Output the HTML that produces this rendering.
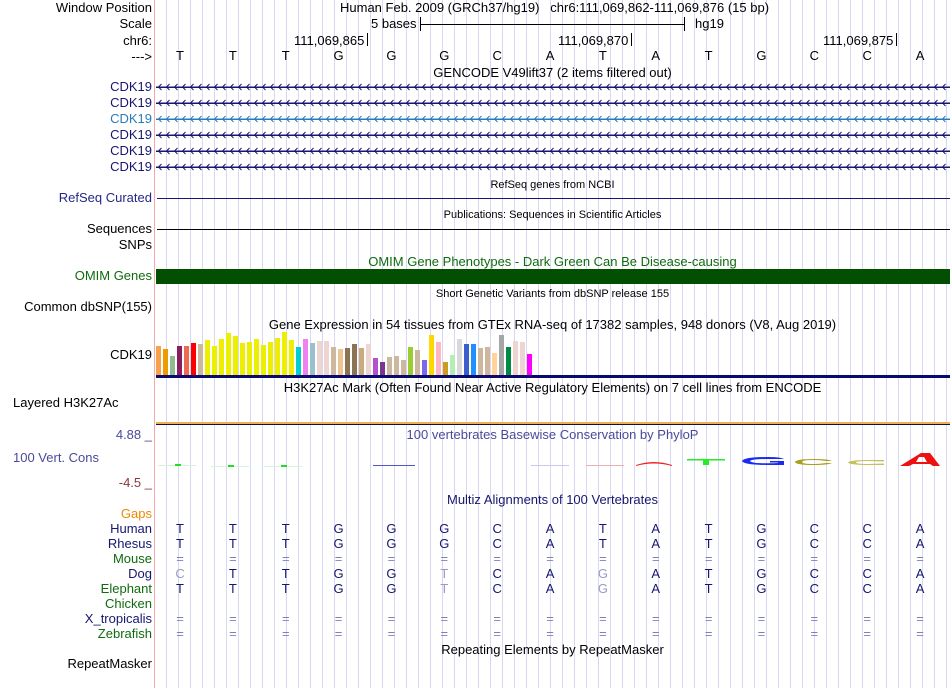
<!DOCTYPE html>
<html><head><meta charset="utf-8"><style>
body{margin:0;width:950px;height:688px;background:#fff;position:relative;overflow:hidden;font-family:"Liberation Sans",sans-serif;font-size:13px;color:#000}
.grid{position:absolute;left:155px;top:0;width:795px;height:688px;background:repeating-linear-gradient(90deg,transparent 0,transparent 11px,#d8d8f4 11px,#d8d8f4 12px)}
.pink{position:absolute;left:154px;top:0;width:1px;height:688px;background:#f4a8a8}
.t{position:absolute;white-space:nowrap;line-height:14px}
.l{position:absolute;right:798px;white-space:nowrap;line-height:14px;text-align:right}
.c{position:absolute;left:155px;width:795px;text-align:center;white-space:nowrap;line-height:14px}
.s{font-size:11px}
.row{position:absolute;left:153.6px;display:flex;line-height:14px}
.row span{width:52.86px;text-align:center}
.n{color:#161670}.g{color:#0f6b0f}
.bars div{position:absolute;bottom:0;width:5px}
</style></head><body>
<div class="grid"></div><div class="pink"></div>

<div class="l" style="top:1px">Window Position</div>
<div class="l" style="top:17px">Scale</div>
<div class="l" style="top:34px">chr6:</div>
<div class="l" style="top:50px">---&gt;</div>

<div class="t" style="left:340px;top:1px">Human Feb. 2009 (GRCh37/hg19) &nbsp; chr6:111,069,862-111,069,876 (15 bp)</div>
<div class="t" style="left:371px;top:17px">5 bases</div>
<div style="position:absolute;left:420px;top:24px;width:264px;height:1px;background:#000"></div>
<div style="position:absolute;left:420px;top:17px;width:1px;height:14px;background:#000"></div>
<div style="position:absolute;left:684px;top:17px;width:1px;height:14px;background:#000"></div>
<div class="t" style="left:695px;top:17px">hg19</div>
<div class="t" style="left:294px;top:34px">111,069,865</div>
<div style="position:absolute;left:367px;top:33px;width:1px;height:13px;background:#000"></div>
<div class="t" style="left:558px;top:34px">111,069,870</div>
<div style="position:absolute;left:631px;top:33px;width:1px;height:13px;background:#000"></div>
<div class="t" style="left:823px;top:34px">111,069,875</div>
<div style="position:absolute;left:896px;top:33px;width:1px;height:13px;background:#000"></div>
<div class="row" style="top:49px"><span>T</span><span>T</span><span>T</span><span>G</span><span>G</span><span>G</span><span>C</span><span>A</span><span>T</span><span>A</span><span>T</span><span>G</span><span>C</span><span>C</span><span>A</span></div>
<div class="c" style="top:66px">GENCODE V49lift37 (2 items filtered out)</div>

<div class="l n" style="top:80px">CDK19</div>
<div class="l n" style="top:96px">CDK19</div>
<div class="l" style="top:112px;color:#2a7ab8">CDK19</div>
<div class="l n" style="top:128px">CDK19</div>
<div class="l n" style="top:144px">CDK19</div>
<div class="l n" style="top:160px">CDK19</div>
<svg style="position:absolute;left:156px;top:80px" width="794" height="95">
<defs>
<pattern id="p1" x="0" y="0" width="8" height="16" patternUnits="userSpaceOnUse"><path d="M5.5 4 L2.5 7 L5.5 10" fill="none" stroke="#161670" stroke-width="1"/></pattern>
<pattern id="p2" x="0" y="0" width="8" height="16" patternUnits="userSpaceOnUse"><path d="M5.5 4 L2.5 7 L5.5 10" fill="none" stroke="#2a7ab8" stroke-width="1"/></pattern>
</defs>
<g fill="url(#p1)">
<rect x="0" y="2" width="794" height="10"/><rect x="0" y="18" width="794" height="10"/>
<rect x="0" y="50" width="794" height="10"/><rect x="0" y="66" width="794" height="10"/><rect x="0" y="82" width="794" height="10"/></g>
<rect x="0" y="34" width="794" height="10" fill="url(#p2)"/>
<g fill="#161670"><rect x="0" y="6.5" width="794" height="1.5"/><rect x="0" y="22.5" width="794" height="1.5"/><rect x="0" y="54.5" width="794" height="1.5"/><rect x="0" y="70.5" width="794" height="1.5"/><rect x="0" y="86.5" width="794" height="1.5"/></g>
<rect x="0" y="38.5" width="794" height="1.5" fill="#2a7ab8"/>
</svg>

<div class="c s" style="top:178px">RefSeq genes from NCBI</div>
<div class="l" style="top:191px;color:#26268a">RefSeq Curated</div>
<div style="position:absolute;left:157px;top:198px;width:793px;height:1px;background:#161670"></div>
<div class="c s" style="top:208px">Publications: Sequences in Scientific Articles</div>
<div class="l" style="top:222px">Sequences</div>
<div style="position:absolute;left:157px;top:229px;width:793px;height:1px;background:#000"></div>
<div class="l" style="top:238px">SNPs</div>
<div class="c g" style="top:255px">OMIM Gene Phenotypes - Dark Green Can Be Disease-causing</div>
<div class="l g" style="top:269px">OMIM Genes</div>
<div style="position:absolute;left:156px;top:269px;width:794px;height:15px;background:#024f02"></div>
<div class="c s" style="top:287px">Short Genetic Variants from dbSNP release 155</div>
<div class="l" style="top:300px">Common dbSNP(155)</div>
<div class="c" style="top:318px">Gene Expression in 54 tissues from GTEx RNA-seq of 17382 samples, 948 donors (V8, Aug 2019)</div>
<div class="l" style="top:348px">CDK19</div>
<div class="bars" style="position:absolute;left:156px;top:331px;width:380px;height:44px">
<div style="left:0;height:29px;background:#F9A14A"></div><div style="left:7px;height:26px;background:#EE9A00"></div><div style="left:14px;height:19px;background:#8FBC8F"></div><div style="left:21px;height:29px;background:#8B1C62"></div><div style="left:28px;height:29px;background:#EE6A50"></div><div style="left:35px;height:32px;background:#FF0000"></div><div style="left:42px;height:31px;background:#CDB79E"></div><div style="left:49px;height:35px;background:#EEEE00"></div><div style="left:56px;height:29px;background:#EEEE00"></div><div style="left:63px;height:36px;background:#EEEE00"></div><div style="left:70px;height:42px;background:#EEEE00"></div><div style="left:77px;height:39px;background:#EEEE00"></div><div style="left:84px;height:32px;background:#EEEE00"></div><div style="left:91px;height:33px;background:#EEEE00"></div><div style="left:98px;height:36px;background:#EEEE00"></div><div style="left:105px;height:30px;background:#EEEE00"></div><div style="left:112px;height:33px;background:#EEEE00"></div><div style="left:119px;height:37px;background:#EEEE00"></div><div style="left:126px;height:43px;background:#EEEE00"></div><div style="left:133px;height:35px;background:#EEEE00"></div><div style="left:140px;height:28px;background:#00CED1"></div><div style="left:147px;height:36px;background:#EE82EE"></div><div style="left:154px;height:32px;background:#9AC0CD"></div><div style="left:161px;height:34px;background:#EED5D2"></div><div style="left:168px;height:34px;background:#EED5D2"></div><div style="left:175px;height:28px;background:#CDB79E"></div><div style="left:182px;height:26px;background:#EEC591"></div><div style="left:189px;height:27px;background:#8B7355"></div><div style="left:196px;height:31px;background:#8B7355"></div><div style="left:203px;height:27px;background:#CDAA7D"></div><div style="left:210px;height:31px;background:#EED5D2"></div><div style="left:217px;height:17px;background:#B452CD"></div><div style="left:224px;height:13px;background:#7A378B"></div><div style="left:231px;height:18px;background:#CDB79E"></div><div style="left:238px;height:19px;background:#CDB79E"></div><div style="left:245px;height:15px;background:#CDB79E"></div><div style="left:252px;height:28px;background:#9ACD32"></div><div style="left:259px;height:25px;background:#CDB79E"></div><div style="left:266px;height:15px;background:#7B68EE"></div><div style="left:273px;height:40px;background:#FFD700"></div><div style="left:280px;height:33px;background:#FFB6C1"></div><div style="left:287px;height:13px;background:#CD9B1D"></div><div style="left:294px;height:20px;background:#B4EEB4"></div><div style="left:301px;height:36px;background:#D9D9D9"></div><div style="left:308px;height:31px;background:#3A5FCD"></div><div style="left:315px;height:31px;background:#1E90FF"></div><div style="left:322px;height:27px;background:#CDB79E"></div><div style="left:329px;height:28px;background:#CDB79E"></div><div style="left:336px;height:22px;background:#FFD39B"></div><div style="left:343px;height:40px;background:#A6A6A6"></div><div style="left:350px;height:28px;background:#008B45"></div><div style="left:357px;height:34px;background:#EED5D2"></div><div style="left:364px;height:33px;background:#EED5D2"></div><div style="left:371px;height:21px;background:#FF00FF"></div>
</div>
<div style="position:absolute;left:156px;top:375px;width:794px;height:3px;background:#0a0a6e"></div>
<div class="c" style="top:381px">H3K27Ac Mark (Often Found Near Active Regulatory Elements) on 7 cell lines from ENCODE</div>
<div class="t" style="left:13px;top:396px">Layered H3K27Ac</div>
<div style="position:absolute;left:156px;top:422px;width:794px;height:2px;background:#f0b050"></div>
<div style="position:absolute;left:156px;top:424px;width:794px;height:1px;background:#101040"></div>

<div class="l" style="top:428px;color:#4a4a9a">4.88 _</div>
<div class="c" style="top:428px;color:#4a4a9a">100 vertebrates Basewise Conservation by PhyloP</div>
<div class="t" style="left:13px;top:451px;color:#4a4a9a">100 Vert. Cons</div>
<div class="l" style="top:476px;color:#8a3a3a">-4.5 _</div>
<svg style="position:absolute;left:156px;top:440px" width="794" height="30">
<g fill="#d8f4d8"><rect x="2" y="25" width="38" height="1"/><rect x="55" y="26" width="38" height="1"/><rect x="108" y="26" width="38" height="1"/></g>
<g fill="#22dd22"><rect x="19" y="24" width="6" height="2"/><rect x="72" y="25" width="6" height="2"/><rect x="125" y="25" width="6" height="2"/></g>
<rect x="217" y="25" width="42" height="1" fill="#5555cc"/>
<rect x="375" y="25" width="38" height="1" fill="#c8c8ee"/>
<rect x="430" y="25" width="38" height="1" fill="#f0b0b0"/>
<path d="M480 25 Q498 19 516 25 L516 26 Q498 21 480 26Z" fill="#ee2222"/>
<rect x="531" y="19" width="38" height="1.5" fill="#22ee22"/><rect x="547" y="19" width="6" height="6" fill="#22ee22"/>
<path d="M612 17 Q588 17 586 21 Q588 25 612 25 L628 25 L628 21 L614 21 L614 22.5 L622 22.5 L622 23 Q612 23.5 600 23 Q594 22 594 21 Q596 19 612 19 L622 19 L628 19 Q624 17 612 17Z" fill="#1a2aee"/>
<path d="M658 19 Q640 19 639 22 Q640 25 658 25 Q672 25 676 23 L670 23 Q664 24 658 24 Q646 24 646 22 Q646 20 658 20 Q664 20 670 21 L676 21 Q672 19 658 19Z" fill="#aaa020"/>
<path d="M712 20 Q694 20 692 22.5 Q694 25 712 25 L728 25 L728 23.5 L712 24 Q700 24 700 22.5 Q700 21 712 21 L728 21.5 L728 20Z" fill="#c8c060"/>
<path d="M744 26 L765 13 L774 13 L784 26 L777 26 L774 24 L757 24 L753 26Z M760 22 L771 22 L768 17 L763 17Z" fill="#ee1111"/>
</svg>

<div class="c n" style="top:493px">Multiz Alignments of 100 Vertebrates</div>
<div class="l" style="top:507px;color:#ee8800">Gaps</div>
<div class="l n" style="top:522px">Human</div>
<div class="l n" style="top:537px">Rhesus</div>
<div class="l g" style="top:552px">Mouse</div>
<div class="l n" style="top:567px">Dog</div>
<div class="l g" style="top:582px">Elephant</div>
<div class="l g" style="top:597px">Chicken</div>
<div class="l n" style="top:612px">X_tropicalis</div>
<div class="l g" style="top:627px">Zebrafish</div>
<div class="row n" style="top:522px"><span>T</span><span>T</span><span>T</span><span>G</span><span>G</span><span>G</span><span>C</span><span>A</span><span>T</span><span>A</span><span>T</span><span>G</span><span>C</span><span>C</span><span>A</span></div>
<div class="row n" style="top:537px"><span>T</span><span>T</span><span>T</span><span>G</span><span>G</span><span>G</span><span>C</span><span>A</span><span>T</span><span>A</span><span>T</span><span>G</span><span>C</span><span>C</span><span>A</span></div>
<div class="row" style="top:552px;color:#8080b8"><span>=</span><span>=</span><span>=</span><span>=</span><span>=</span><span>=</span><span>=</span><span>=</span><span>=</span><span>=</span><span>=</span><span>=</span><span>=</span><span>=</span><span>=</span></div>
<div class="row n" style="top:567px"><span style="color:#9a9ac4">C</span><span>T</span><span>T</span><span>G</span><span>G</span><span style="color:#9a9ac4">T</span><span>C</span><span>A</span><span style="color:#9a9ac4">G</span><span>A</span><span>T</span><span>G</span><span>C</span><span>C</span><span>A</span></div>
<div class="row n" style="top:582px"><span>T</span><span>T</span><span>T</span><span>G</span><span>G</span><span style="color:#9a9ac4">T</span><span>C</span><span>A</span><span style="color:#9a9ac4">G</span><span>A</span><span>T</span><span>G</span><span>C</span><span>C</span><span>A</span></div>
<div class="row" style="top:612px;color:#8080b8"><span>=</span><span>=</span><span>=</span><span>=</span><span>=</span><span>=</span><span>=</span><span>=</span><span>=</span><span>=</span><span>=</span><span>=</span><span>=</span><span>=</span><span>=</span></div>
<div class="row" style="top:627px;color:#8080b8"><span>=</span><span>=</span><span>=</span><span>=</span><span>=</span><span>=</span><span>=</span><span>=</span><span>=</span><span>=</span><span>=</span><span>=</span><span>=</span><span>=</span><span>=</span></div>
<div class="c" style="top:643px">Repeating Elements by RepeatMasker</div>
<div class="l" style="top:657px">RepeatMasker</div>
</body></html>
